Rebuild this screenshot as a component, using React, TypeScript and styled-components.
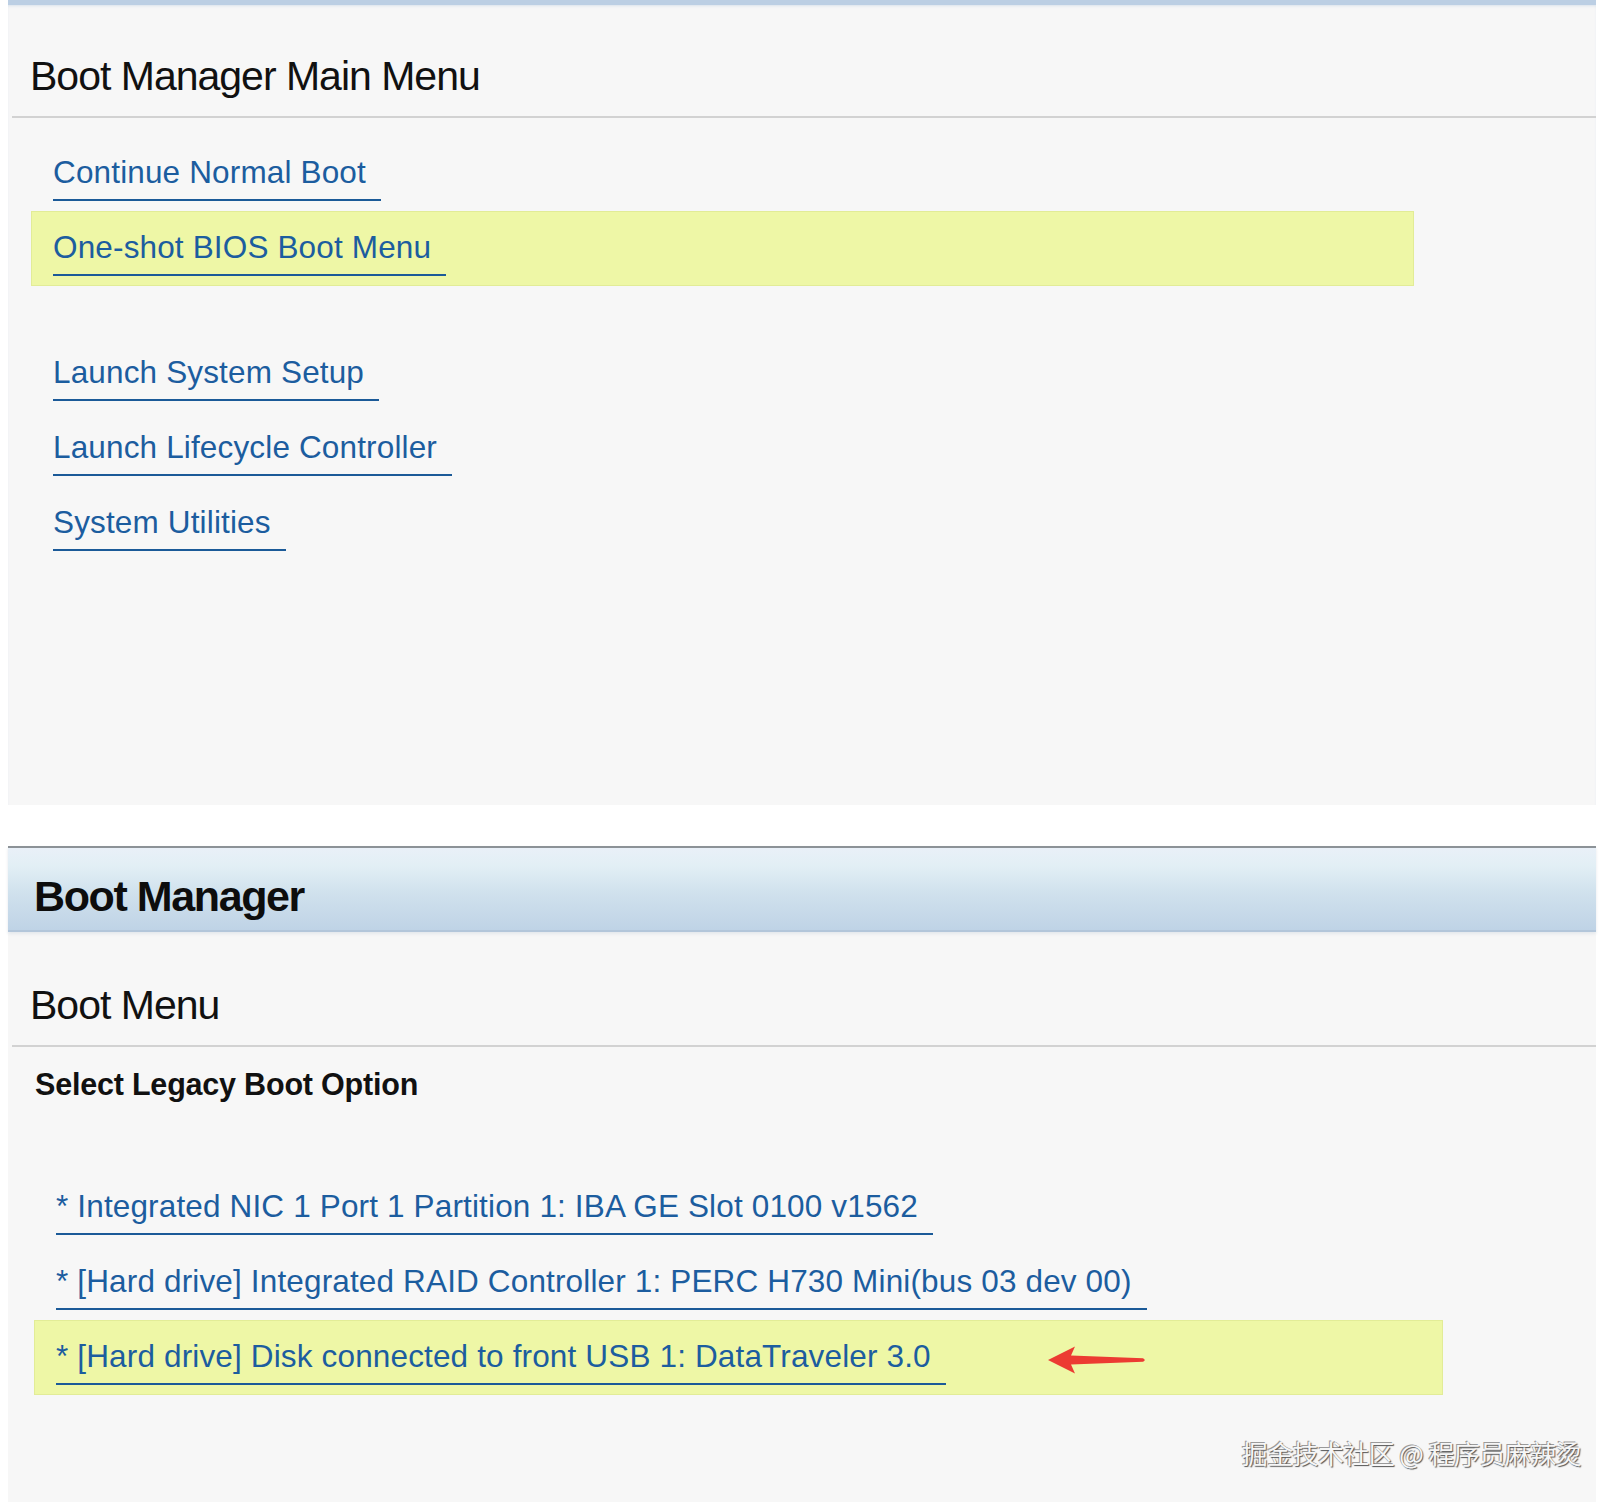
import React from 'react';
import styled, { createGlobalStyle } from 'styled-components';

const GlobalStyle = createGlobalStyle`
  html, body {
    margin: 0;
    padding: 0;
    background: #ffffff;
  }
  body {
    font-family: "Liberation Sans", Arial, sans-serif;
  }
`;

type Entry = { label: string; selected?: boolean; marked?: boolean };

const mainGroups: Entry[][] = [
  [{ label: 'Continue Normal Boot' }, { label: 'One-shot BIOS Boot Menu', selected: true }],
  [{ label: 'Launch System Setup' }, { label: 'Launch Lifecycle Controller' }, { label: 'System Utilities' }],
];

const legacyOptions: Entry[] = [
  { label: '* Integrated NIC 1 Port 1 Partition 1: IBA GE Slot 0100 v1562' },
  { label: '* [Hard drive] Integrated RAID Controller 1: PERC H730 Mini(bus 03 dev 00)' },
  { label: '* [Hard drive] Disk connected to front USB 1: DataTraveler 3.0', selected: true, marked: true },
];

const Arrow = () => (
  <ArrowSvg viewBox="0 0 100 30" width="100" height="30">
    <path d="M1 15 L28 1.5 L24 10.5 L96 13.2 Q99.5 15 96 16.8 L24 19.5 L28 28.5 Z" fill="#ec3b32" />
  </ArrowSvg>
);

const App = () => {
  return (
    <>
      <GlobalStyle />
      <Page>
        <MainPanel>
          <SectionHeading $top={48}>Boot Manager Main Menu</SectionHeading>
          <MenuList $inset={23} $width={1383} $top={18}>
            {mainGroups.map((group, i) => (
              <Group key={i} $gap={i === 0 ? 0 : 50}>
                {group.map((item) => (
                  <Row key={item.label} $selected={item.selected}>
                    <ItemLink>{item.label}</ItemLink>
                  </Row>
                ))}
              </Group>
            ))}
          </MenuList>
        </MainPanel>

        <BootPanel>
          <TitleBar>
            <Title>Boot Manager</Title>
          </TitleBar>
          <SectionHeading $top={50}>Boot Menu</SectionHeading>
          <SubHeading>Select Legacy Boot Option</SubHeading>
          <MenuList $inset={26} $width={1409} $top={68}>
            {legacyOptions.map((item) => (
              <Row key={item.label} $selected={item.selected}>
                <ItemLink>{item.label}</ItemLink>
                {item.marked && <Arrow />}
              </Row>
            ))}
          </MenuList>
          <Watermark>掘金技术社区 @ 程序员麻辣烫</Watermark>
        </BootPanel>
      </Page>
    </>
  );
};

export default App;

const Page = styled.div`
width: 1588px;
padding-left: 8px;
`
const MainPanel = styled.section`
background: #f7f7f7;
height: 805px;
box-sizing: border-box;
border-top: 5px solid #bccfe4;
box-shadow: inset 0 2px 3px -1px #d9e2ec;
overflow: hidden;
`
const SectionHeading = styled.h1<{ $top: number }>`
margin: ${p => p.$top}px 0 0 4px;
padding: 0 0 17px 18px;
border-bottom: 2px solid #d2d2d2;
font-size: 41px;
line-height: 46px;
font-weight: normal;
letter-spacing: -1px;
color: #111111;
`
const MenuList = styled.div<{ $inset: number; $width: number; $top: number }>`
margin: ${p => p.$top}px 0 0 ${p => p.$inset}px;
width: ${p => p.$width}px;
`
const Group = styled.div<{ $gap: number }>`
margin-top: ${p => p.$gap}px;
`
const Row = styled.div<{ $selected?: boolean }>`
position: relative;
box-sizing: border-box;
height: 75px;
padding: 17px 0 0 21px;
border: 1px solid ${p => (p.$selected ? '#e2ec97' : 'transparent')};
background: ${p => (p.$selected ? '#eef7a6' : 'transparent')};
`
const ItemLink = styled.span`
display: inline-block;
padding: 0 15px 9px 0;
border-bottom: 2px solid #1b5a98;
font-size: 31.5px;
line-height: 36px;
letter-spacing: 0.15px;
color: #1c5d9f;
white-space: nowrap;
`
const ArrowSvg = styled.svg`
position: absolute;
left: 1012px;
top: 24px;
`
const BootPanel = styled.section`
position: relative;
margin-top: 41px;
height: 656px;
background: #f7f7f7;
`
const TitleBar = styled.header`
box-sizing: border-box;
height: 86px;
padding: 23px 0 0 26px;
border-top: 2px solid #8c9297;
border-bottom: 2px solid #b3c6da;
background: linear-gradient(180deg, #e9f0f8 0%, #e2eff5 22%, #d0e1ed 55%, #bfd3e6 100%);
box-shadow: 0 2px 3px #e4e8ec;
`
const Title = styled.h2`
margin: 0;
font-size: 43px;
line-height: 50px;
font-weight: bold;
letter-spacing: -1.4px;
color: #0d0d0d;
`
const SubHeading = styled.h3`
margin: 19px 0 0 27px;
font-size: 30.5px;
line-height: 36px;
font-weight: bold;
letter-spacing: -0.2px;
color: #111111;
`
const Watermark = styled.div`
position: absolute;
right: 15px;
bottom: 32px;
font-family: "Noto Sans CJK SC", "Liberation Sans", sans-serif;
font-size: 26px;
line-height: 34px;
letter-spacing: -0.6px;
color: #f6f6f6;
text-shadow: 1px 1px 1px #555555, -1px -1px 0 #9a9a9a;
`
